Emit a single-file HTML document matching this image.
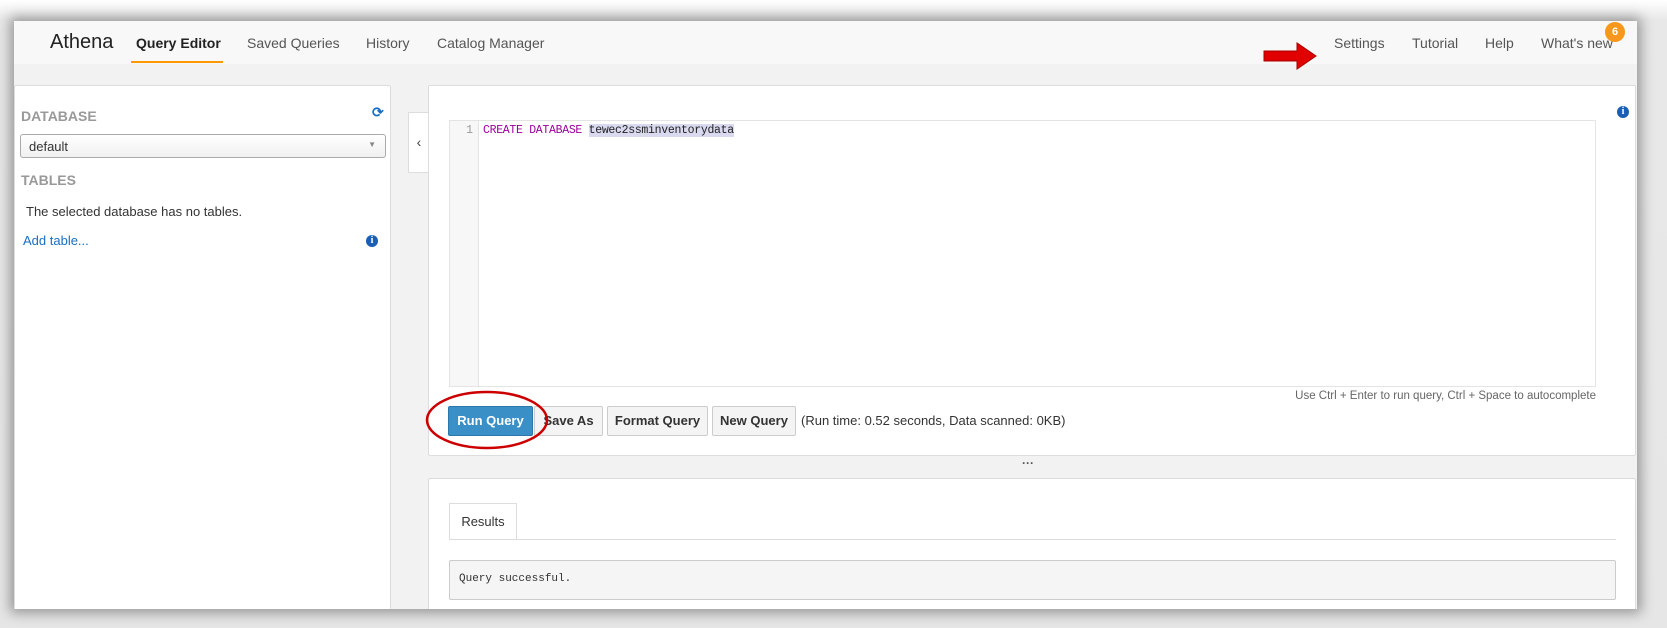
<!DOCTYPE html>
<html><head><meta charset="utf-8"><style>
*{box-sizing:border-box;margin:0;padding:0}
body{width:1667px;height:628px;overflow:hidden;background:linear-gradient(#fff 0,#e8e8e8 20px,#e6e6e6 100%);font-family:"Liberation Sans",sans-serif;position:relative}
.card{position:absolute;left:14px;top:21px;width:1623px;height:588px;background:#f2f2f2;box-shadow:0 0 12px 4px rgba(0,0,0,.35);overflow:hidden}
.hdr{position:absolute;left:0;top:0;width:100%;height:43px;background:#f8f8f8}
.a{position:absolute;font-size:14px;color:#555;top:14px}
.abs{position:absolute}
.panel{position:absolute;background:#fff;border:1px solid #ddd;border-radius:2px}
.lbl{position:absolute;font-size:14px;font-weight:bold;color:#999}
.btn{position:absolute;top:385px;height:30px;border:1px solid #ccc;background:#f4f4f4;font-size:13px;font-weight:bold;color:#333;text-align:center;line-height:28px;border-radius:2px}
.mono{font-family:"Liberation Mono","DejaVu Sans Mono",monospace}
.info{position:absolute;width:12px;height:12px;border-radius:50%;background:#1a5fb4;color:#fff;font-size:10px;font-weight:bold;text-align:center;line-height:12px;font-family:"Liberation Serif",serif}
</style></head><body>
<div class="card">
 <div class="hdr">
  <div class="abs" style="left:36px;top:10px;font-size:20px;color:#222">Athena</div>
  <div class="a" style="left:122px;color:#222;font-weight:bold">Query Editor</div>
  <div class="abs" style="left:117px;top:40px;width:92px;height:2px;background:#f90"></div>
  <div class="a" style="left:233px">Saved Queries</div>
  <div class="a" style="left:352px">History</div>
  <div class="a" style="left:423px">Catalog Manager</div>
  <div class="a" style="left:1320px">Settings</div>
  <div class="a" style="left:1398px">Tutorial</div>
  <div class="a" style="left:1471px">Help</div>
  <div class="a" style="left:1527px">What's new</div>
  <div class="abs" style="left:1591px;top:1px;width:20px;height:20px;border-radius:50%;background:#f7981d;color:#fff;font-size:11px;font-weight:bold;text-align:center;line-height:20px">6</div>
  <svg class="abs" style="left:1249px;top:21px" width="55" height="30"><polygon points="1,9 34,9 34,1 53,14 34,27 34,19 1,19" fill="#e00000" stroke="#a00" stroke-width="1"/></svg>
 </div>
 <div class="panel" style="left:0;top:64px;width:377px;height:540px">
  <div class="lbl" style="left:6px;top:22px">DATABASE</div>
  <div class="abs" style="left:357px;top:18px;color:#1a6ec2;font-size:14px;font-weight:bold">⟳</div>
  <div class="abs" style="left:5px;top:48px;width:366px;height:24px;border:1px solid #aaa;border-radius:3px;background:linear-gradient(#fff,#f0f0f0);font-size:13px;color:#333;padding:4px 8px">default<span style="position:absolute;right:9px;top:5px;font-size:8px;color:#888">▼</span></div>
  <div class="lbl" style="left:6px;top:86px">TABLES</div>
  <div class="abs" style="left:11px;top:118px;font-size:13px;color:#333">The selected database has no tables.</div>
  <div class="abs" style="left:8px;top:147px;font-size:13px;color:#1a6ec2">Add table...</div>
  <div class="info" style="left:351px;top:149px">i</div>
 </div>
 <div class="abs" style="left:394px;top:91px;width:21px;height:61px;background:#fff;border:1px solid #ddd;border-right:none;font-size:14px;color:#444;text-align:center;line-height:58px">‹</div>
 <div class="panel" style="left:414px;top:64px;width:1208px;height:371px">
  <div class="info" style="left:1188px;top:20px">i</div>
  <div class="abs" style="left:20px;top:34px;width:1147px;height:267px;border:1px solid #e4e4e4;background:#fff">
   <div class="abs mono" style="left:0;top:0;width:29px;height:100%;background:#f7f7f7;border-right:1px solid #e4e4e4;font-size:11.5px;color:#999;text-align:right;padding:3px 5px 0 0">1</div>
   <div class="abs mono" style="left:33px;top:3px;font-size:11.5px;letter-spacing:-0.3px;color:#909;white-space:pre">CREATE DATABASE <span style="color:#222;background:#d9d9f0">tewec2ssminventorydata</span></div>
  </div>
  <div class="abs" style="right:39px;top:304px;font-size:11.5px;color:#666">Use Ctrl + Enter to run query, Ctrl + Space to autocomplete</div>
 </div>
 <div class="btn" style="left:434px;width:85px;background:#3a8fc7;border-color:#2b78ab;color:#fff">Run Query</div>
 <div class="btn" style="left:520px;width:69px">Save As</div>
 <div class="btn" style="left:593px;width:101px">Format Query</div>
 <div class="btn" style="left:698px;width:84px">New Query</div>
 <div class="abs" style="left:787px;top:392px;font-size:13px;color:#333">(Run time: 0.52 seconds, Data scanned: 0KB)</div>
 <svg class="abs" style="left:410px;top:368px" width="130" height="62"><ellipse cx="63" cy="31" rx="60" ry="28" fill="none" stroke="#c00" stroke-width="2.5"/></svg>
 <div class="abs" style="left:1008px;top:435px;font-size:12px;color:#555;font-weight:bold">···</div>
 <div class="panel" style="left:414px;top:457px;width:1208px;height:140px">
  <div class="abs" style="left:20px;top:24px;width:68px;height:37px;border:1px solid #ddd;border-bottom:none;background:#fff;font-size:13px;color:#333;text-align:center;line-height:36px">Results</div>
  <div class="abs" style="left:20px;top:60px;width:1167px;height:1px;background:#ddd"></div>
  <div class="abs mono" style="left:20px;top:81px;width:1167px;height:40px;background:#f5f5f5;border:1px solid #ccc;border-radius:2px;font-size:11px;color:#333;padding:12px 9px">Query successful.</div>
 </div>
</div>
</body></html>
